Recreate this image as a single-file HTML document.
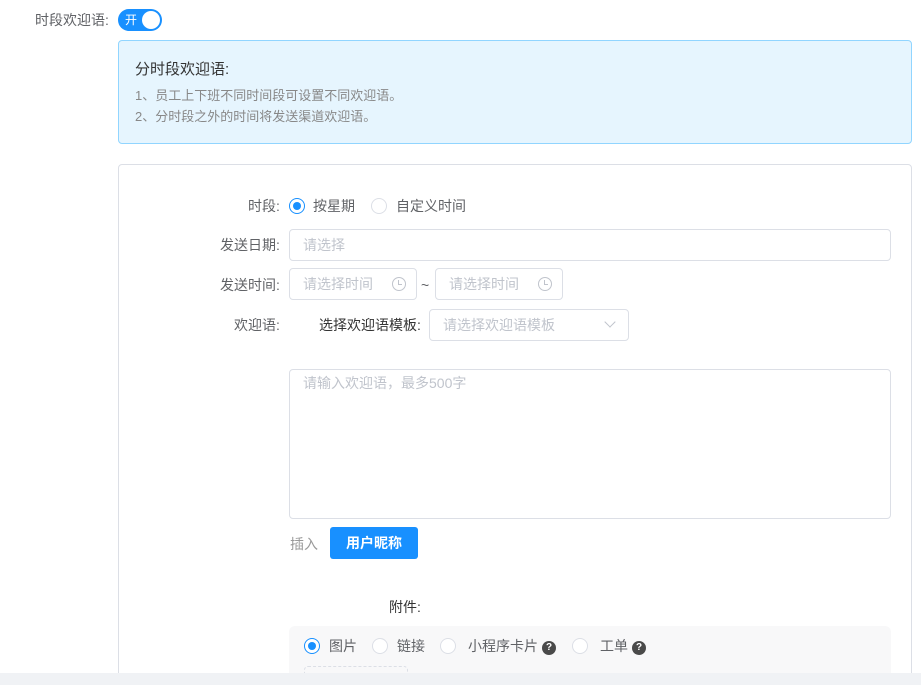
<!DOCTYPE html>
<html style="overflow:hidden;height:685px"><head><meta charset="utf-8"><style>
*{box-sizing:border-box;margin:0;padding:0}
body{width:921px;height:685px;overflow:hidden;background:#fff;font-family:"Liberation Sans","Noto Sans CJK SC",sans-serif;font-size:14px;color:#606266;position:relative}
.a{position:absolute;white-space:nowrap}
.inp{position:absolute;border:1px solid #dcdfe6;border-radius:4px;background:#fff;color:#c0c4cc;padding-left:13px;line-height:30px;height:32px}
.radio{position:absolute;width:16px;height:16px;border:1px solid #dcdfe6;border-radius:50%;background:#fff}
.radio.on{border-color:#1890ff;background:#fff}
.radio.on::after{content:"";position:absolute;left:3px;top:3px;width:8px;height:8px;border-radius:50%;background:#1890ff}
.q{display:inline-block;width:14px;height:14px;border-radius:50%;background:#4a4a4a;color:#fff;font-size:10px;line-height:14px;text-align:center;font-weight:bold;vertical-align:1px;margin-left:4px}
.clk{position:absolute;width:14px;height:14px;border:1.3px solid #c0c4cc;border-radius:50%}
.clk::after{content:"";position:absolute;left:5px;top:2px;width:3px;height:4px;border-left:1.3px solid #c0c4cc;border-bottom:1.3px solid #c0c4cc}
</style></head><body>
<div class="a" style="left:35px;top:10px;line-height:20px">时段欢迎语:</div>
<div class="a" style="left:118px;top:9px;width:44px;height:22px;border-radius:11px;background:#1890ff">
<span class="a" style="left:7px;top:2px;color:#fff;font-size:12px;line-height:18px">开</span>
<div class="a" style="left:24px;top:2px;width:18px;height:18px;border-radius:50%;background:#fff"></div></div>
<div class="a" style="left:118px;top:40px;width:794px;height:104px;background:#e6f5fe;border:1px solid #91d5ff;border-radius:4px"></div>
<div class="a" style="left:135px;top:60px;font-size:15px;color:#333;line-height:20px">分时段欢迎语:</div>
<div class="a" style="left:135px;top:87px;font-size:13px;color:#888;line-height:18px">1、员工上下班不同时间段可设置不同欢迎语。</div>
<div class="a" style="left:135px;top:108px;font-size:13px;color:#888;line-height:18px">2、分时段之外的时间将发送渠道欢迎语。</div>
<div class="a" style="left:118px;top:164px;width:794px;height:518px;border:1px solid #dcdfe6;border-radius:4px"></div>
<div class="a" style="left:248px;top:196px;line-height:20px">时段:</div>
<div class="radio on" style="left:289px;top:198px"></div>
<div class="a" style="left:313px;top:196px;line-height:20px">按星期</div>
<div class="radio" style="left:371px;top:198px"></div>
<div class="a" style="left:396px;top:196px;line-height:20px">自定义时间</div>
<div class="a" style="left:220px;top:235px;line-height:20px">发送日期:</div>
<div class="inp" style="left:289px;top:229px;width:602px">请选择</div>
<div class="a" style="left:220px;top:275px;line-height:20px">发送时间:</div>
<div class="inp" style="left:289px;top:268px;width:128px">请选择时间</div>
<div class="clk" style="left:392px;top:277px"></div>
<div class="a" style="left:421px;top:275px;line-height:20px">~</div>
<div class="inp" style="left:435px;top:268px;width:128px">请选择时间</div>
<div class="clk" style="left:538px;top:277px"></div>
<div class="a" style="left:234px;top:315px;line-height:20px">欢迎语:</div>
<div class="a" style="left:319px;top:315px;line-height:20px;color:#333">选择欢迎语模板:</div>
<div class="inp" style="left:429px;top:309px;width:200px">请选择欢迎语模板</div>
<div class="a" style="left:606px;top:318px;width:8px;height:8px;border-right:1px solid #c0c4cc;border-bottom:1px solid #c0c4cc;transform:rotate(45deg)"></div>
<div class="inp" style="left:289px;top:369px;width:602px;height:150px;line-height:26px;padding-top:0">请输入欢迎语，最多500字</div>
<div class="a" style="left:290px;top:534px;line-height:20px;color:#999">插入</div>
<div class="a" style="left:330px;top:527px;width:88px;height:32px;background:#1890ff;border-radius:3px;color:#fff;font-weight:bold;text-align:center;line-height:32px">用户昵称</div>
<div class="a" style="left:389px;top:597px;line-height:20px;color:#333">附件:</div>
<div class="a" style="left:289px;top:626px;width:602px;height:56px;background:#f8f8f9;border-radius:6px"></div>
<div class="radio on" style="left:304px;top:638px"></div>
<div class="a" style="left:329px;top:636px;line-height:20px">图片</div>
<div class="radio" style="left:372px;top:638px"></div>
<div class="a" style="left:397px;top:636px;line-height:20px">链接</div>
<div class="radio" style="left:440px;top:638px"></div>
<div class="a" style="left:468px;top:636px;line-height:20px">小程序卡片<span class="q">?</span></div>
<div class="radio" style="left:572px;top:638px"></div>
<div class="a" style="left:600px;top:636px;line-height:20px">工单<span class="q">?</span></div>
<div class="a" style="left:304px;top:666px;width:104px;height:16px;border:1px dashed #dcdfe6;border-radius:4px"></div>
<div class="a" style="left:0;top:673px;width:921px;height:12px;background:#f0f2f5"></div>
</body></html>
